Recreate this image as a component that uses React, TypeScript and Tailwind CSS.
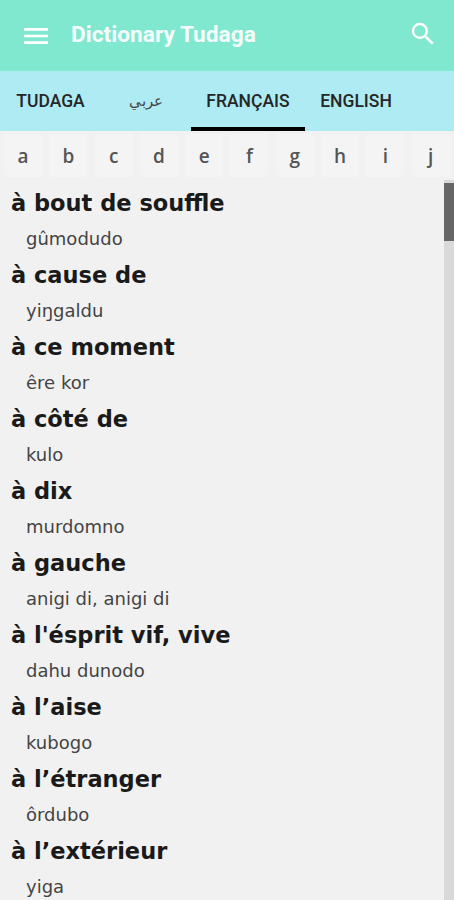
import { MdMenu, MdSearch } from 'react-icons/md'

const tabs = [
  { name: 'TUDAGA', width: 'w-[101px]' },
  { name: 'عربي', width: 'w-[90px]', arabic: true },
  { name: 'FRANÇAIS', width: 'w-[114px]', active: true },
  { name: 'ENGLISH', width: 'w-[102px]' },
]

const letters = ['a', 'b', 'c', 'd', 'e', 'f', 'g', 'h', 'i', 'j']

const words = [
  { fr: 'à bout de souffle', tu: 'gûmodudo' },
  { fr: 'à cause de', tu: 'yiŋgaldu' },
  { fr: 'à ce moment', tu: 'êre kor' },
  { fr: 'à côté de', tu: 'kulo' },
  { fr: 'à dix', tu: 'murdomno' },
  { fr: 'à gauche', tu: 'anigi di, anigi di' },
  { fr: "à l'ésprit vif, vive", tu: 'dahu dunodo' },
  { fr: 'à l’aise', tu: 'kubogo' },
  { fr: 'à l’étranger', tu: 'ôrdubo' },
  { fr: 'à l’extérieur', tu: 'yiga' },
]

export default function App() {
  return (
    <div className="h-[900px] w-[454px] overflow-hidden bg-[#f1f1f1] flex flex-col">
      {/* Header */}
      <header className="h-[71px] shrink-0 bg-[#80e8cf] flex items-center pl-[20px] pr-[16px] text-white">
        <MdMenu className="h-[32px] w-[32px] shrink-0" />
        <h1 className="ml-[19px] flex-1 font-['Roboto',sans-serif] text-[22.7px] font-bold text-[#f4fdfb]">Dictionary Tudaga</h1>
        <MdSearch className="h-[30px] w-[30px] -mt-[3px] shrink-0" />
      </header>

      {/* Tabs */}
      <nav className="h-[60px] shrink-0 bg-[#aeebf3] flex">
        {tabs.map((tab) => (
          <div
            key={tab.name}
            className={`${tab.width} flex items-center justify-center font-['Roboto',sans-serif] ${
              tab.arabic ? 'text-[15px] font-normal text-[#444444]' : 'text-[17.5px] font-medium text-[#262626]'
            } ${tab.active ? 'border-b-[4px] border-black pt-[4px]' : ''}`}
          >
            {tab.name}
          </div>
        ))}
      </nav>

      {/* Alphabet */}
      <div className="h-[49px] shrink-0 flex gap-[7.3px] pl-[4px] pt-[3px] overflow-hidden">
        {letters.map((letter) => (
          <div
            key={letter}
            className="h-[43px] w-[38px] shrink-0 rounded-[3px] bg-[#f4f4f4] pt-[2px] flex items-center justify-center font-['Open_Sans',sans-serif] text-[19px] font-semibold text-[#555555]"
          >
            {letter}
          </div>
        ))}
      </div>

      {/* Word list */}
      <div className="flex-1 flex min-h-0">
        <ul className="flex-1 pl-[11px] font-['DejaVu_Sans',sans-serif]">
          {words.map((word) => (
            <li key={word.fr} className="h-[72px]">
              <div className="h-[46px] pt-[5px] text-[22.5px] leading-[36px] font-bold text-[#1a1a1a]">{word.fr}</div>
              <div className="pl-[15px] text-[18px] leading-[26px] text-[#444444]">{word.tu}</div>
            </li>
          ))}
        </ul>
        <div className="w-[10px] shrink-0 bg-[#d9d9d9] pt-[3px]">
          <div className="h-[58px] bg-[#666666]" />
        </div>
      </div>
    </div>
  )
}
